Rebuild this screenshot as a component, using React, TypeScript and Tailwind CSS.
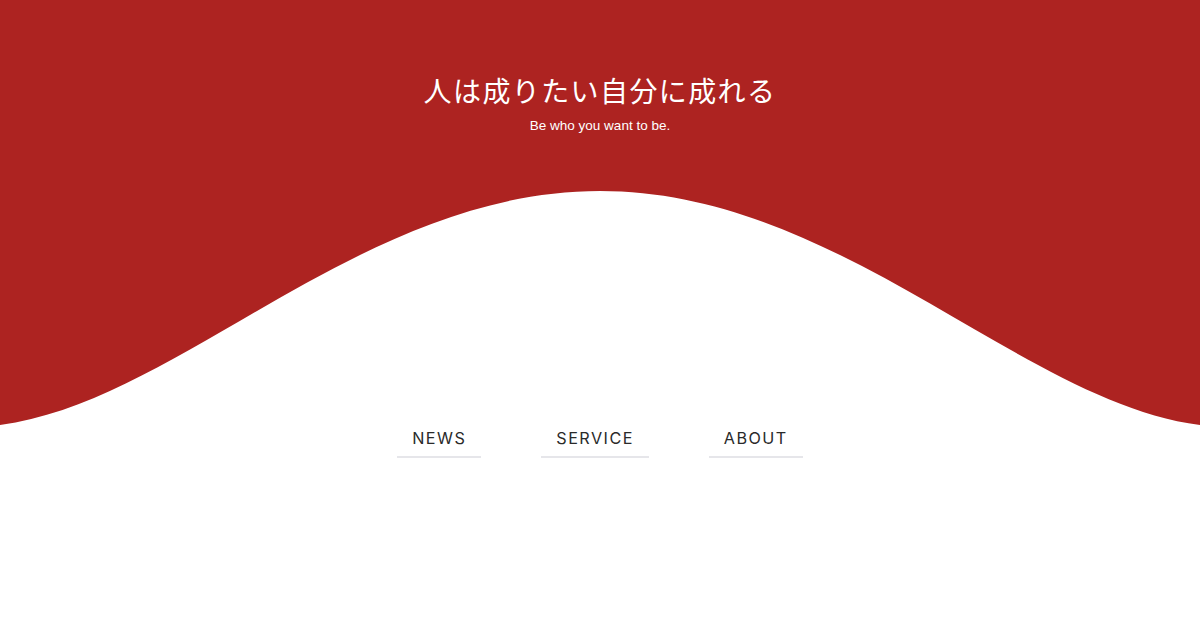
import React from "react";

const wave =
  "M0 0 L0 245 C180 221.6 360 11 600 11 C840 11 1020 221.6 1200 245 L1200 0 Z";

export default function App() {
  const items = ["NEWS", "SERVICE", "ABOUT"];
  return (
    <div className="w-[1200px] h-[630px] bg-white overflow-hidden">
      <div className="bg-[#ad2321] h-[180px] flex flex-col items-center pt-[73px]">
        <h1
          className="text-white text-[28px] leading-[34px] tracking-[0.05em] font-normal"
          style={{ fontFamily: '"Noto Sans CJK JP", "Noto Sans", sans-serif' }}
        >
          人は成りたい自分に成れる
        </h1>
        <p
          className="text-white text-[13.5px] leading-[16px] mt-[11px]"
          style={{ fontFamily: '"Liberation Sans", Arial, sans-serif' }}
        >
          Be who you want to be.
        </p>
      </div>
      <svg width="1200" height="245" viewBox="0 0 1200 245" className="block">
        <path d={wave} fill="#ad2321" />
      </svg>
      <nav className="flex justify-center gap-[60px] mt-[1px]" style={{ fontFamily: "Inter, sans-serif" }}>
        {items.map((t) => (
          <a
            key={t}
            className="px-[15px] pb-[6px] border-b-2 border-[#e6e6ea] text-[16.2px] leading-[24px] tracking-[0.09em] text-[#2a2a2a]"
          >
            {t}
          </a>
        ))}
      </nav>
    </div>
  );
}
